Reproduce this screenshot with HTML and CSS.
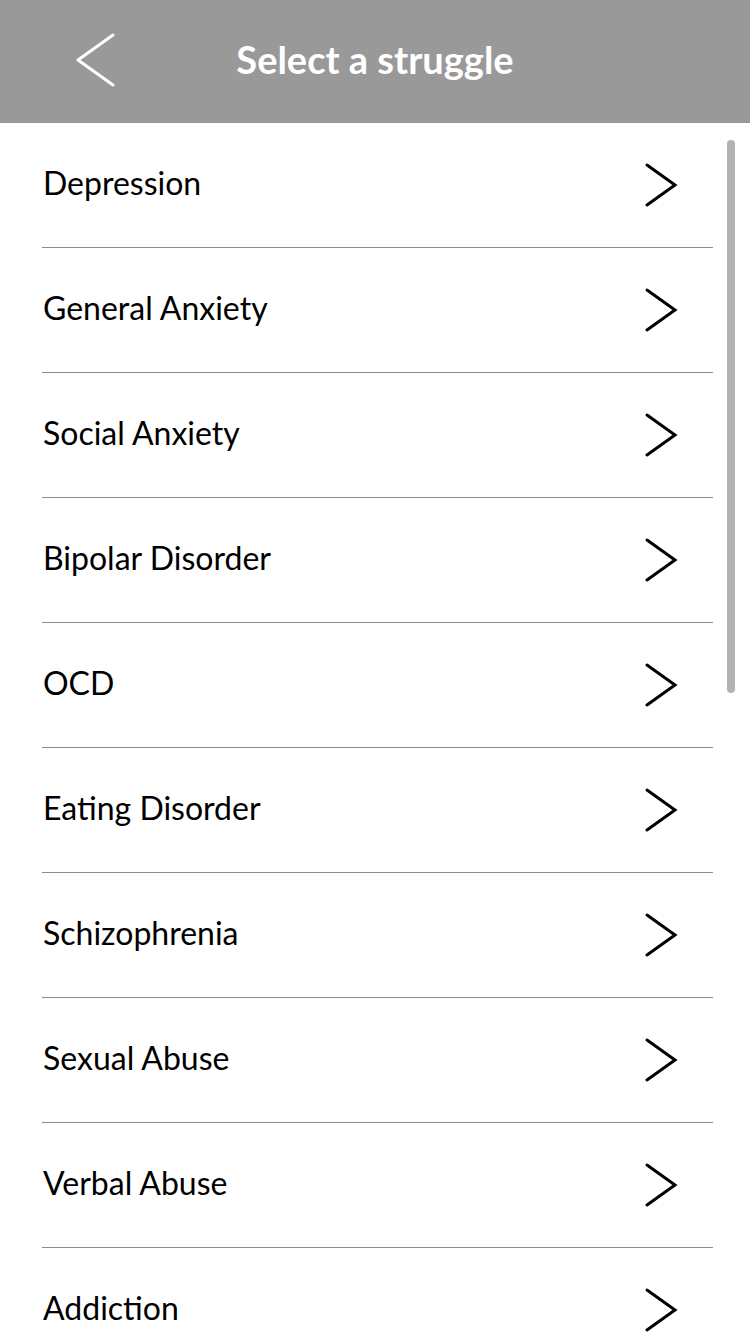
FILE: index.html
```html
<!DOCTYPE html>
<html>
<head>
<meta charset="utf-8">
<link rel="stylesheet" href="styles.css">
</head>
<body>
<div class="screen">
  <header class="topbar">
    <button class="back" aria-label="Back">
      <svg width="40" height="56" viewBox="0 0 40 56"><path d="M37 2 L2 27 L37 52" fill="none" stroke="#fff" stroke-width="3" stroke-linecap="round" stroke-linejoin="round"/></svg>
    </button>
    <h1 class="title">Select a struggle</h1>
  </header>
  <div class="content">
    <ul class="list">
      <li class="row"><span class="label">Depression</span><svg class="chev" width="36" height="44" viewBox="0 0 36 44"><path d="M4 2 L32 22 L4 42" fill="none" stroke="#000" stroke-width="3" stroke-linecap="round"/></svg></li>
      <li class="row"><span class="label">General Anxiety</span><svg class="chev" width="36" height="44" viewBox="0 0 36 44"><path d="M4 2 L32 22 L4 42" fill="none" stroke="#000" stroke-width="3" stroke-linecap="round"/></svg></li>
      <li class="row"><span class="label">Social Anxiety</span><svg class="chev" width="36" height="44" viewBox="0 0 36 44"><path d="M4 2 L32 22 L4 42" fill="none" stroke="#000" stroke-width="3" stroke-linecap="round"/></svg></li>
      <li class="row"><span class="label">Bipolar Disorder</span><svg class="chev" width="36" height="44" viewBox="0 0 36 44"><path d="M4 2 L32 22 L4 42" fill="none" stroke="#000" stroke-width="3" stroke-linecap="round"/></svg></li>
      <li class="row"><span class="label">OCD</span><svg class="chev" width="36" height="44" viewBox="0 0 36 44"><path d="M4 2 L32 22 L4 42" fill="none" stroke="#000" stroke-width="3" stroke-linecap="round"/></svg></li>
      <li class="row"><span class="label">Eating Disorder</span><svg class="chev" width="36" height="44" viewBox="0 0 36 44"><path d="M4 2 L32 22 L4 42" fill="none" stroke="#000" stroke-width="3" stroke-linecap="round"/></svg></li>
      <li class="row"><span class="label">Schizophrenia</span><svg class="chev" width="36" height="44" viewBox="0 0 36 44"><path d="M4 2 L32 22 L4 42" fill="none" stroke="#000" stroke-width="3" stroke-linecap="round"/></svg></li>
      <li class="row"><span class="label">Sexual Abuse</span><svg class="chev" width="36" height="44" viewBox="0 0 36 44"><path d="M4 2 L32 22 L4 42" fill="none" stroke="#000" stroke-width="3" stroke-linecap="round"/></svg></li>
      <li class="row"><span class="label">Verbal Abuse</span><svg class="chev" width="36" height="44" viewBox="0 0 36 44"><path d="M4 2 L32 22 L4 42" fill="none" stroke="#000" stroke-width="3" stroke-linecap="round"/></svg></li>
      <li class="row"><span class="label">Addiction</span><svg class="chev" width="36" height="44" viewBox="0 0 36 44"><path d="M4 2 L32 22 L4 42" fill="none" stroke="#000" stroke-width="3" stroke-linecap="round"/></svg></li>
    </ul>
    <div class="scrollbar"></div>
  </div>
</div>
</body>
</html>
```
FILE: styles.css
```css
* { box-sizing: border-box; }
html, body { margin: 0; padding: 0; background: #fff; }
body { font-family: Lato, "Open Sans", sans-serif; width: 750px; height: 1334px; overflow: hidden; }
.screen { display: flex; flex-direction: column; height: 1334px; }
.topbar {
  height: 123px;
  background: #999999;
  display: flex;
  align-items: center;
  position: relative;
  flex-shrink: 0;
}
.back {
  position: absolute;
  left: 76px;
  top: 33px;
  border: 0;
  background: none;
  padding: 0;
  width: 40px;
  height: 56px;
}
.back svg { display: block; }
.title {
  margin: 0 auto;
  color: #fff;
  font-size: 38px;
  font-weight: 700;
  letter-spacing: 0;
  padding-bottom: 6px;
}
.content { position: relative; flex: 1; overflow: hidden; }
.list { list-style: none; margin: 0; padding: 0 37px 0 42px; }
.row {
  height: 125px;
  display: flex;
  align-items: center;
  justify-content: space-between;
  border-bottom: 1.5px solid #8c8c8c;
  padding: 0 34px 0 1px;
}
.label { font-size: 32px; color: #000; padding-bottom: 5px; }
.chev { display: block; }
.scrollbar {
  position: absolute;
  right: 15px;
  top: 17px;
  width: 8px;
  height: 553px;
  border-radius: 4px;
  background: #b3b3b3;
}
```
